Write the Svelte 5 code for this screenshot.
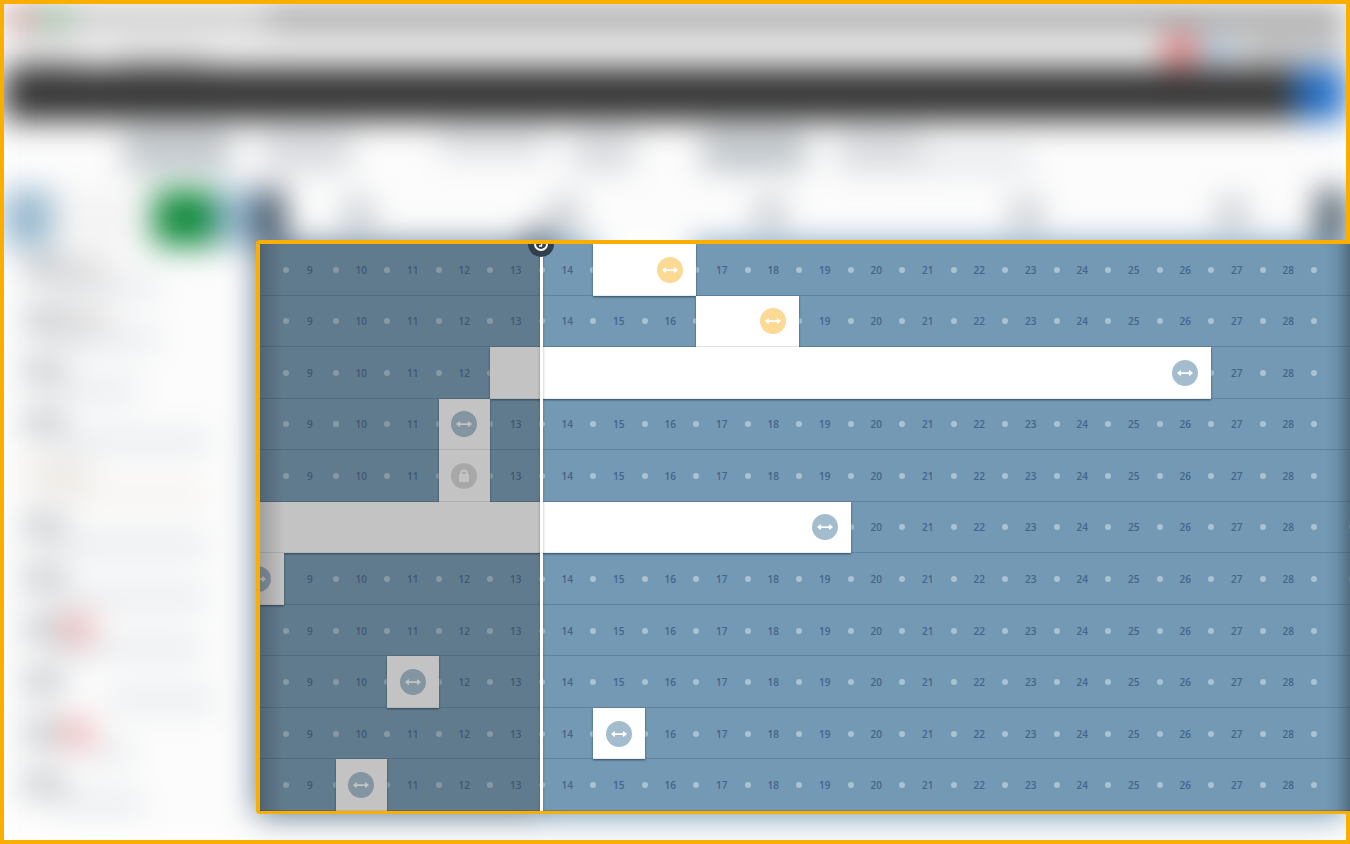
<script>
  const days = Array.from({ length: 20 }, (_, i) => i + 9);

  // Each row may hold one booking; `from` and `to` are days of the month.
  const rows = [
    { from: 15, to: 16, kind: 'pending' },
    { from: 17, to: 18, kind: 'pending' },
    { from: 13, to: 26, kind: 'open' },
    { from: 12, to: 12, kind: 'open' },
    { from: 12, to: 12, kind: 'locked' },
    { from: 8, to: 19, kind: 'open' },
    { from: 8, to: 8, kind: 'open' },
    null,
    { from: 11, to: 11, kind: 'open' },
    { from: 15, to: 15, kind: 'open' },
    { from: 10, to: 10, kind: 'open' }
  ];

  const people = [
    { tone: 'wide', start: 60, end: 160 },
    { tone: 'wide', start: 60, end: 160 },
    { tone: '', start: 60, end: 140 },
    { tone: '', start: 60, end: 212 },
    { tone: 'tan', start: 60, end: 210 },
    { tone: '', start: 60, end: 210 },
    { tone: '', start: 60, end: 208 },
    { tone: 'alert', start: 60, end: 204 },
    { tone: '', start: 110, end: 216 },
    { tone: 'alert', start: 90, end: 134 },
    { tone: '', start: 60, end: 144 }
  ];
</script>

<div class="stage">
  <div class="backdrop" aria-hidden="true">
    <div class="titlebar">
      <i class="light red"></i>
      <i class="light green"></i>
      <i class="tabs"></i>
    </div>
    <div class="toolbar">
      <i class="crumb short"></i>
      <i class="crumb"></i>
      <i class="notice"></i>
      <i class="help"></i>
      <i class="user"></i>
    </div>
    <div class="nav"><i></i></div>
    <div class="facts">
      <i class="strong f1"></i>
      <i class="soft f2"></i>
      <i class="soft f3"></i>
      <i class="soft f4"></i>
      <i class="strong f5"></i>
      <i class="soft f6"></i>
      <i class="faint f7"></i>
    </div>
    <div class="lower">
      <div class="side">
        <div class="actions"><i class="pale"></i><i class="add"></i><i class="pale next"></i></div>
        <div class="people">
          {#each people as p}
            <div class="person {p.tone}">
              <div class="name"><b></b><em></em></div>
              <div class="note" style="margin-left: {p.start - 26}px; width: {p.end - p.start}px"></div>
            </div>
          {/each}
        </div>
      </div>
      <div class="ghost">
        <div class="scale">
          <i class="edge"></i>
          <div class="weeks"><i></i><i></i><i></i><i></i><i></i></div>
          <i class="edge"></i>
        </div>
        <div class="mass"><i class="pin"></i></div>
      </div>
    </div>
  </div>

  <main class="board">
    {#each rows as bar}
      <div class="row">
        <span class="lead"></span>
        {#each days as d, i}
          <span class="day" style="grid-column: {i + 2}">{d}</span>
        {/each}
        {#if bar}
          <div class="bar" style="grid-column: {bar.from - 7} / {bar.to - 6}">
            <button class={bar.kind} aria-label={bar.kind === 'locked' ? 'Locked' : 'Resize'}>
              <svg viewBox="0 0 26 26" width="26" height="26">
                {#if bar.kind === 'locked'}
                  <path d="M10 12v-1.500a3 3 0 0 1 6 0V12" fill="none" stroke="currentColor" stroke-width="2" />
                  <rect x="8" y="11" width="10" height="8" rx="1" fill="currentColor" />
                {:else}
                  <path
                    d="M9 12.200h8v-1.200q0-1 .8-.5l2.700 2.100q.6.500 0 1l-2.700 2.100q-.8.500-.8-.5V14H9v1.200q0 1-.8.500l-2.700-2.100q-.6-.5 0-1l2.700-2.100q.8-.5.8.500z"
                    fill="currentColor"
                  />
                {/if}
              </svg>
            </button>
          </div>
        {/if}
      </div>
    {/each}

    <div class="cover">
      <div class="past"></div>
      <div class="now">
        <svg viewBox="0 0 26 26" width="26" height="26">
          <circle cx="13" cy="13" r="13" fill="#2f3f4e" />
          <circle cx="13" cy="13" r="6" fill="none" stroke="#fff" stroke-width="2" />
          <path d="M13.500 9v6H11" fill="none" stroke="#fff" stroke-width="1.500" />
        </svg>
      </div>
      <div class="fade left"></div>
      <div class="fade right"></div>
    </div>
  </main>
</div>

<style>
  :global(body) {
    margin: 0;
    background: #fff;
  }

  .stage {
    --accent: #f9ae00;
    display: grid;
    grid-template: minmax(0, 1fr) / minmax(0, 1fr);
    min-height: 100vh;
    overflow: hidden;
    background: #fff;
    font-family: 'Open Sans', 'Noto Sans', sans-serif;
  }

  .stage::after {
    content: '';
    z-index: 1;
    grid-area: 1 / 1;
    border: 4px solid var(--accent);
    pointer-events: none;
  }

  /* Blurred application window behind the board */
  .backdrop {
    grid-area: 1 / 1;
    display: flex;
    flex-direction: column;
    margin: 4px;
    filter: blur(16px);
    background: #fcfcfc;
  }

  .backdrop i {
    display: block;
  }

  .titlebar {
    display: flex;
    align-items: center;
    height: 28px;
    background: #c8c8c8;
  }

  .light {
    width: 24px;
    height: 20px;
    margin-left: 4px;
  }

  .light.red {
    background: #c98585;
  }

  .light.green {
    width: 28px;
    background: #7fae85;
    margin-left: 8px;
  }

  .tabs {
    flex: 1;
    align-self: stretch;
    margin-left: 200px;
    background: #a2a2a2;
  }

  .toolbar {
    display: flex;
    align-items: center;
    height: 36px;
    background: #f8f8f8;
  }

  .crumb {
    align-self: flex-end;
    width: 90px;
    height: 16px;
    margin-left: 36px;
    background: #d0d0d0;
  }

  .crumb.short {
    width: 64px;
    margin-left: 12px;
  }

  .notice {
    width: 28px;
    height: 30px;
    margin-left: auto;
    background: #e86a6a;
  }

  .help {
    width: 26px;
    height: 22px;
    margin: 0 12px 0 10px;
    background: #90b4d4;
  }

  .user {
    width: 104px;
    height: 20px;
    background: #b4b4b4;
  }

  .nav {
    display: flex;
    justify-content: flex-end;
    height: 52px;
    background: #303030;
  }

  .nav i {
    width: 50px;
    background: #1c6ac4;
  }

  .facts {
    display: flex;
    align-items: flex-start;
    box-sizing: border-box;
    height: 56px;
    padding: 12px 0 0 120px;
  }

  .facts i {
    flex: none;
    height: 38px;
  }

  .strong {
    background: #bcc3c8;
  }

  .soft {
    background: #d6d9dd;
  }

  .faint {
    background: #dde1e5;
  }

  .f1 { width: 106px; }
  .f2 { width: 90px; margin-left: 32px; }
  .facts .f3 { width: 106px; margin-left: 88px; height: 24px; }
  .f4 { width: 62px; margin-left: 26px; }
  .f5 { width: 104px; margin-left: 68px; }
  .f6 { width: 84px; margin-left: 32px; }
  .facts .f7 { width: 110px; height: 18px; margin-top: 20px; }

  .lower {
    flex: 1;
    display: flex;
  }

  .side {
    display: flex;
    flex-direction: column;
    width: 252px;
    margin-top: 14px;
  }

  .actions {
    display: flex;
    justify-content: flex-end;
    height: 56px;
    background: #f4f4f4;
  }

  .pale {
    width: 48px;
    margin-right: auto;
    background: #94b6cd;
  }

  .add {
    width: 60px;
    background: #108a3c;
  }

  .pale.next {
    width: 42px;
    margin: 0;
  }

  .people {
    flex: 1;
    display: grid;
    grid-auto-rows: minmax(48px, 1fr);
    padding: 10px 0 16px 20px;
  }

  .name {
    display: flex;
  }

  .name b {
    width: 40px;
    height: 24px;
    background: #bfc3c7;
  }

  .wide em {
    width: 44px;
    height: 24px;
    background: #e0dddc;
  }

  .alert em {
    width: 28px;
    height: 24px;
    background: #f2a6a6;
  }

  .note {
    height: 14px;
    background: #dbe0e4;
  }

  .person.tan b {
    width: 64px;
    background: #e9e4dd;
  }

  .tan .note {
    background: #f1ede7;
  }

  .ghost {
    flex: 1;
    display: flex;
    flex-direction: column;
    margin-bottom: 24px;
  }

  .scale {
    display: flex;
    height: 53px;
    padding-top: 14px;
  }

  .edge {
    width: 28px;
    background: #38495a;
  }

  .weeks {
    flex: 1;
    display: flex;
    align-items: center;
    gap: 178px;
    padding: 0 0 6px 60px;
  }

  .weeks i {
    flex: none;
    width: 28px;
    height: 30px;
    background: #bcc3ca;
  }

  .weeks i:nth-child(4) {
    margin-left: 50px;
  }

  .mass {
    position: relative;
    flex: 1;
    background: linear-gradient(90deg, #627b90 26%, #7399b4 26% 31%, #fff 31% 40%, #7399b4 40%) top / 100% 52px no-repeat,
      linear-gradient(90deg, #627b90 26%, #7399b4 26%);
  }

  .pin {
    position: absolute;
    left: 26%;
    top: -13px;
    width: 26px;
    height: 26px;
    margin-left: -13px;
    border-radius: 50%;
    background: #2f3f4e;
  }

  /* Sharp scheduling board */
  .board {
    position: relative;
    z-index: 2;
    grid-area: 1 / 1;
    display: grid;
    grid-auto-rows: minmax(44px, 1fr);
    margin: 240px 0 30px 256px;
    border: solid var(--accent);
    border-width: 4px 0 3px 4px;
    border-radius: 4px 0 0 4px;
    overflow: hidden;
    background: #7399b4;
  }

  .row,
  .cover {
    display: grid;
    grid-template-columns: 24px repeat(20, minmax(0, 1fr)) 36px;
  }

  .row {
    grid-template-rows: minmax(0, 1fr);
    box-shadow: inset 0 -1px #6283a0;
  }

  .lead,
  .day {
    grid-row: 1;
    position: relative;
    display: flex;
    align-items: center;
    justify-content: center;
    font-size: 10px;
    line-height: 12px;
    font-weight: 600;
    color: #43658a;
  }

  .lead::after,
  .day::after {
    content: '';
    position: absolute;
    right: -3px;
    width: 6px;
    height: 6px;
    border-radius: 50%;
    background: #a9c3d2;
  }

  .lead::after {
    right: -5px;
  }

  .bar {
    z-index: 1;
    grid-row: 1;
    display: flex;
    align-items: center;
    justify-content: flex-end;
    padding-right: 13px;
    background: #fff;
    box-shadow: inset 0 -1px #ececec, 0 1px 2px rgb(20 40 60 / 70%);
  }

  .bar button {
    flex: none;
    width: 26px;
    height: 26px;
    padding: 0;
    border: 0;
    border-radius: 50%;
    color: #fff;
    background: #a3bdce;
  }

  .bar button.pending {
    background: #fcd994;
  }

  .bar button.locked {
    background: #d9d9d9;
  }

  .bar svg,
  .now svg {
    display: block;
  }

  .cover {
    position: absolute;
    inset: 0;
    z-index: 2;
    grid-template-rows: minmax(0, 1fr);
    pointer-events: none;
  }

  .past {
    grid-area: 1 / 1 / 2 / 7;
    background: rgb(56 56 56 / 30%);
  }

  .now {
    grid-area: 1 / 7;
    z-index: 1;
    width: 3px;
    margin-left: -2px;
    background: #fff;
    box-shadow: 0 0 3px rgb(0 0 0 / 30%);
  }

  .now svg {
    margin: -13px 0 0 -12px;
  }

  .fade.left {
    grid-area: 1 / 1;
    background: linear-gradient(90deg, rgb(0 0 0 / 18%), transparent);
  }

  .fade.right {
    grid-area: 1 / 22;
    margin-left: 10px;
    background: linear-gradient(90deg, transparent, rgb(40 55 65 / 10%) 50%, rgb(40 55 65 / 45%));
  }
</style>
